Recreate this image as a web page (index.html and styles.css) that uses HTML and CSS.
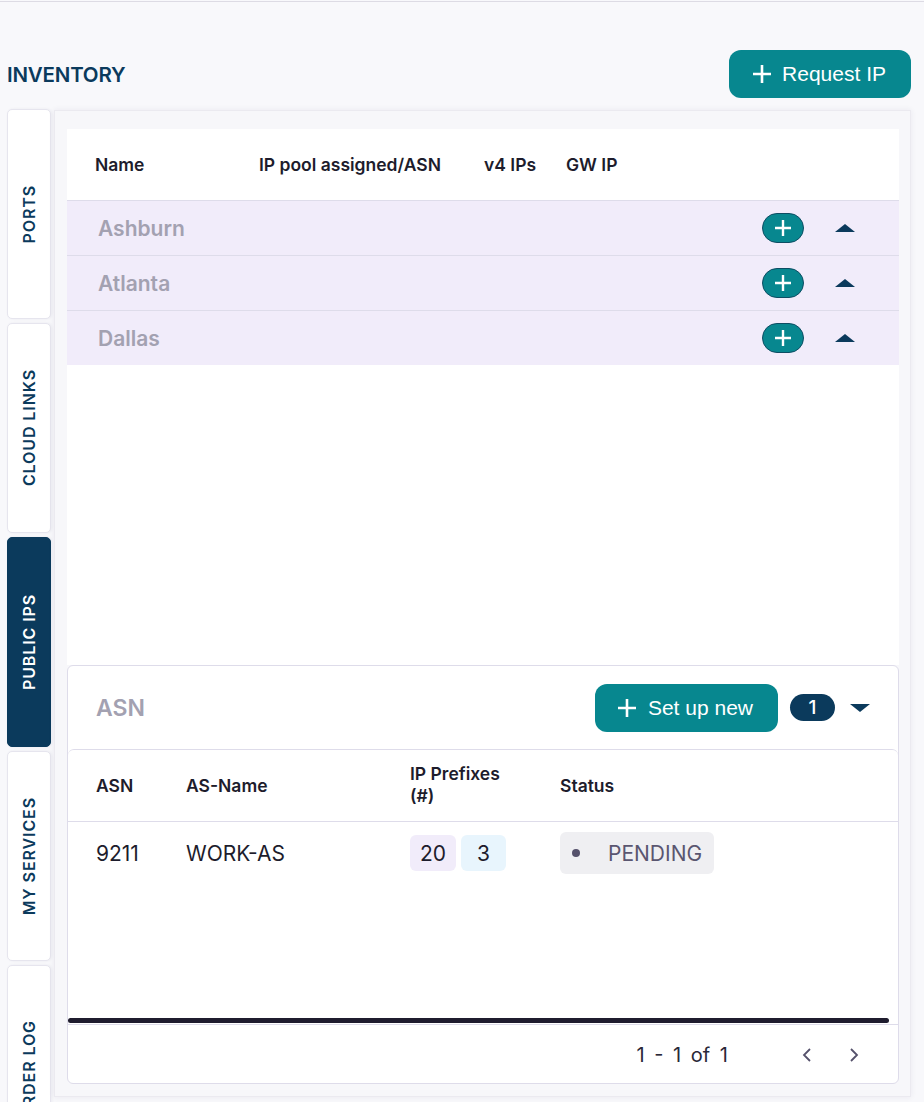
FILE: index.html
```html
<!DOCTYPE html>
<html lang="en">
<head>
    <meta charset="UTF-8">
    <meta name="viewport" content="width=device-width, initial-scale=1.0">
    <title>Inventory - Public IPs</title>
    <link rel="stylesheet" href="styles.css">
</head>
<body>
    <div class="topline"></div>
    <div class="page">
        <div class="page-head">
            <h1 class="page-title">INVENTORY</h1>
            <button class="btn btn-primary">
                <svg width="20" height="20" viewBox="0 0 20 20"><path d="M10 1v18M1 10h18" stroke="#fff" stroke-width="2.6"/></svg>
                Request IP
            </button>
        </div>

        <div class="layout">
            <nav class="tabs">
                <div class="tab"><span>PORTS</span></div>
                <div class="tab"><span>CLOUD LINKS</span></div>
                <div class="tab active"><span>PUBLIC IPS</span></div>
                <div class="tab"><span>MY SERVICES</span></div>
                <div class="tab"><span>ORDER LOG</span></div>
            </nav>

            <main class="panel">
                <section class="pool-table">
                    <div class="pool-head">
                        <div>Name</div>
                        <div>IP pool assigned/ASN</div>
                        <div>v4 IPs</div>
                        <div>GW IP</div>
                    </div>
                    <div class="pool-row">
                        <div class="pool-name">Ashburn</div>
                        <button class="add-btn"><svg width="18" height="18" viewBox="0 0 18 18"><path d="M9 1v16M1 9h16" stroke="#fff" stroke-width="2.4"/></svg></button>
                        <span class="caret caret-up"></span>
                    </div>
                    <div class="pool-row">
                        <div class="pool-name">Atlanta</div>
                        <button class="add-btn"><svg width="18" height="18" viewBox="0 0 18 18"><path d="M9 1v16M1 9h16" stroke="#fff" stroke-width="2.4"/></svg></button>
                        <span class="caret caret-up"></span>
                    </div>
                    <div class="pool-row">
                        <div class="pool-name">Dallas</div>
                        <button class="add-btn"><svg width="18" height="18" viewBox="0 0 18 18"><path d="M9 1v16M1 9h16" stroke="#fff" stroke-width="2.4"/></svg></button>
                        <span class="caret caret-up"></span>
                    </div>
                </section>

                <section class="asn-card">
                    <div class="asn-head">
                        <h2 class="asn-title">ASN</h2>
                        <button class="btn btn-primary btn-setup">
                            <svg width="20" height="20" viewBox="0 0 20 20"><path d="M10 1v18M1 10h18" stroke="#fff" stroke-width="2.6"/></svg>
                            Set up new
                        </button>
                        <span class="count">1</span>
                        <span class="caret caret-down"></span>
                    </div>

                    <div class="asn-table">
                        <div class="asn-cols">
                            <div>ASN</div>
                            <div>AS-Name</div>
                            <div class="col-prefix">IP Prefixes<br>(#)</div>
                            <div>Status</div>
                        </div>
                        <div class="asn-row">
                            <div>9211</div>
                            <div>WORK-AS</div>
                            <div class="chips">
                                <span class="chip chip-v4">20</span>
                                <span class="chip chip-v6">3</span>
                            </div>
                            <div><span class="status"><i class="dot"></i>PENDING</span></div>
                        </div>
                        <div class="asn-fill"></div>
                        <div class="scrollbar"></div>
                        <div class="pager">
                            <span class="pager-text">1 - 1 of 1</span>
                            <svg class="pager-arrow" width="12" height="16" viewBox="0 0 12 16"><path d="M9 2L3 8l6 6" fill="none" stroke="#55516b" stroke-width="1.8"/></svg>
                            <svg class="pager-arrow" width="12" height="16" viewBox="0 0 12 16"><path d="M3 2l6 6-6 6" fill="none" stroke="#55516b" stroke-width="1.8"/></svg>
                        </div>
                    </div>
                </section>
            </main>
        </div>
    </div>
</body>
</html>
```

FILE: styles.css
```css
:root {
    --teal: #07878f;
    --navy: #0b3a5c;
    --ink: #1d1c2c;
    --muted: #a3a1b1;
    --line: #dedcea;
    --lilac: #f1ecfa;
    --page-bg: #f8f8fb;
}

body {
    margin: 0;
    background: var(--page-bg);
    font-family: "Inter", "Noto Sans", sans-serif;
    color: var(--ink);
    overflow: hidden;
}

.topline {
    height: 1px;
    margin-top: 1px;
    background: #dddbe4;
}

.page {
    padding: 0 13px 0 7px;
}

.page-head {
    display: flex;
    align-items: center;
    justify-content: space-between;
    margin-top: 48px;
}

.page-title {
    margin: 0;
    font-size: 20.5px;
    font-weight: 600;
    color: var(--navy);
    letter-spacing: -0.2px;
}

.btn {
    border: none;
    cursor: pointer;
    font-family: "Liberation Sans", Arial, sans-serif;
}

.btn-primary {
    display: flex;
    align-items: center;
    gap: 10px;
    height: 48px;
    padding: 0 25px 0 23px;
    background: var(--teal);
    color: #fff;
    font-size: 21px;
    border-radius: 12px;
}

.layout {
    display: flex;
    gap: 3px;
    margin-top: 11px;
}

.tabs {
    width: 44px;
    display: flex;
    flex-direction: column;
    gap: 4px;
    flex-shrink: 0;
}

.tab {
    height: 210px;
    flex-shrink: 0;
    background: #fff;
    border: 1px solid #e6e5ee;
    border-radius: 5px;
    box-shadow: 1px 0 3px rgba(40, 30, 80, 0.06);
    box-sizing: border-box;
    display: flex;
    align-items: center;
    justify-content: center;
}

.tab span {
    writing-mode: vertical-rl;
    transform: rotate(180deg);
    font-size: 16px;
    font-weight: 600;
    letter-spacing: 0.9px;
    color: var(--navy);
}

.tab.active {
    background: var(--navy);
    border-color: var(--navy);
}

.tab.active span {
    color: #fff;
}

.panel {
    flex: 1;
    height: 987px;
    box-sizing: border-box;
    margin-top: 1px;
    padding: 18px 11px 12px 12px;
    background: #f7f7fa;
    border: 1px solid #ebeaf0;
    box-shadow: 0 0 6px rgba(40, 30, 80, 0.07);
    display: flex;
    flex-direction: column;
}

/* pool table */
.pool-table {
    background: #fff;
    height: 536px;
    flex-shrink: 0;
}

.pool-head {
    display: grid;
    grid-template-columns: 164px 225px 82px 1fr;
    align-items: center;
    height: 71px;
    padding-left: 28px;
    font-size: 17.5px;
    font-weight: 600;
    border-bottom: 1px solid var(--line);
}

.pool-row {
    display: flex;
    align-items: center;
    height: 54px;
    padding: 0 44px 0 31px;
    background: var(--lilac);
    border-bottom: 1px solid var(--line);
}

.pool-row:last-child {
    border-bottom: none;
}

.pool-name {
    flex: 1;
    font-size: 21px;
    font-weight: 600;
    color: var(--muted);
}

.add-btn {
    width: 42px;
    height: 30px;
    padding: 0;
    border: 1px solid #0d4d63;
    border-radius: 15px;
    background: var(--teal);
    display: flex;
    align-items: center;
    justify-content: center;
    cursor: pointer;
}

.caret {
    width: 0;
    height: 0;
    border-left: 10px solid transparent;
    border-right: 10px solid transparent;
}

.caret-up {
    margin-left: 31px;
    border-bottom: 8px solid var(--navy);
}

.caret-down {
    margin-left: 15px;
    border-top: 8px solid var(--navy);
}

/* ASN card */
.asn-card {
    flex: 1;
    display: flex;
    flex-direction: column;
    background: #fff;
    border: 1px solid var(--line);
    border-radius: 6px;
}

.asn-head {
    display: flex;
    align-items: center;
    height: 83px;
    padding: 0 28px;
}

.asn-title {
    flex: 1;
    margin: 0;
    font-size: 23px;
    font-weight: 600;
    color: var(--muted);
}

.btn-setup {
    padding: 0 25px 0 22px;
    gap: 11px;
}

.count {
    margin-left: 12px;
    width: 45px;
    height: 27px;
    border-radius: 14px;
    background: var(--navy);
    color: #fff;
    font-size: 19px;
    font-weight: 500;
    display: flex;
    align-items: center;
    justify-content: center;
}

.asn-table {
    flex: 1;
    display: flex;
    flex-direction: column;
    border-top: 1px solid var(--line);
    border-radius: 6px 6px 0 0;
}

.asn-cols,
.asn-row {
    display: grid;
    grid-template-columns: 90px 224px 150px 1fr;
    align-items: center;
    padding-left: 28px;
}

.asn-cols {
    height: 71px;
    font-size: 17.5px;
    font-weight: 600;
    line-height: 22px;
    border-bottom: 1px solid var(--line);
}

.col-prefix {
    margin-top: -1px;
}

.asn-row {
    height: 62px;
    font-size: 21px;
}

.chips {
    display: flex;
    gap: 5px;
}

.chip {
    width: 46px;
    height: 36px;
    border-radius: 6px;
    display: flex;
    align-items: center;
    justify-content: center;
}

.chip-v4 {
    background: var(--lilac);
}

.chip-v6 {
    width: 45px;
    background: #e8f5fd;
}

.status {
    display: inline-flex;
    align-items: center;
    height: 42px;
    padding: 0 12px;
    border-radius: 6px;
    background: #efeff2;
    color: #5a5670;
    font-size: 21px;
}

.dot {
    width: 8px;
    height: 8px;
    border-radius: 50%;
    background: #55516b;
    margin-right: 28px;
}

.asn-fill {
    flex: 1;
}

.scrollbar {
    height: 5px;
    margin: 0 9px 1px 0;
    background: #1f1c2e;
    border-radius: 3px;
}

.pager {
    display: flex;
    align-items: center;
    justify-content: flex-end;
    height: 59px;
    padding: 2px 38px 0 0;
    box-sizing: border-box;
    border-top: 1px solid var(--line);
    font-size: 20px;
    color: #2a2838;
}

.pager-text {
    margin-right: 73px;
    word-spacing: 4px;
}

.pager-arrow + .pager-arrow {
    margin-left: 35px;
}
```
